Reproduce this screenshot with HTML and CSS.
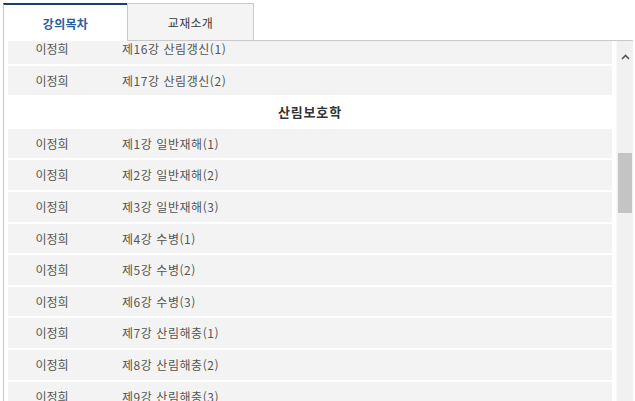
FILE: index.html
```html
<!DOCTYPE html>
<html lang="ko">
<head>
  <meta charset="UTF-8" />
  <title>강의목차</title>
  <link rel="stylesheet" href="styles.css">
</head>
<body>
  <div class="wrap">
    <div class="tabs">
      <button class="tab active">강의목차</button>
      <button class="tab">교재소개</button>
      <div class="tab-rest"></div>
    </div>

    <div class="panel">
      <div class="scroll">
        <div class="list">
          <div class="row"><span class="name">이정희</span><span class="title">제16강 산림갱신(1)</span></div>
          <div class="row"><span class="name">이정희</span><span class="title">제17강 산림갱신(2)</span></div>
          <div class="section">산림보호학</div>
          <div class="row"><span class="name">이정희</span><span class="title">제1강 일반재해(1)</span></div>
          <div class="row"><span class="name">이정희</span><span class="title">제2강 일반재해(2)</span></div>
          <div class="row"><span class="name">이정희</span><span class="title">제3강 일반재해(3)</span></div>
          <div class="row"><span class="name">이정희</span><span class="title">제4강 수병(1)</span></div>
          <div class="row"><span class="name">이정희</span><span class="title">제5강 수병(2)</span></div>
          <div class="row"><span class="name">이정희</span><span class="title">제6강 수병(3)</span></div>
          <div class="row"><span class="name">이정희</span><span class="title">제7강 산림해충(1)</span></div>
          <div class="row"><span class="name">이정희</span><span class="title">제8강 산림해충(2)</span></div>
          <div class="row"><span class="name">이정희</span><span class="title">제9강 산림해충(3)</span></div>
        </div>
      </div>
      <div class="scrollbar">
        <div class="sb-btn">
          <svg width="9" height="6" viewBox="0 0 9 6"><path d="M1 5 L4.5 1.5 L8 5" fill="none" stroke="#555" stroke-width="1.6"/></svg>
        </div>
        <div class="sb-thumb"></div>
      </div>
    </div>
  </div>
</body>
</html>
```

FILE: styles.css
```css
html, body {
  margin: 0;
  padding: 0;
  background: #fff;
  font-family: "Noto Sans CJK KR", "Noto Sans", sans-serif;
  font-size: 12px;
  color: #555;
  overflow: hidden;
}

.wrap {
  width: 630px;
  margin: 3px 0 0 3px;
}

.tabs {
  display: flex;
  height: 38px;
}

.tab {
  box-sizing: border-box;
  height: 38px;
  border: 1px solid #c9c9c9;
  background: #f4f4f4;
  font-family: inherit;
  font-size: 12px;
  color: #3a3a3a;
  padding: 0;
  letter-spacing: 0.3px;
  cursor: pointer;
}

.tab:nth-child(2) {
  width: 127px;
}

.tab.active {
  width: 124px;
  background: #fff;
  border-top: 2px solid #1e3e66;
  border-right: none;
  border-bottom: none;
  color: #2a5d9c;
  font-weight: bold;
}

.tab-rest {
  flex: 1;
  border-bottom: 1px solid #c9c9c9;
}

.panel {
  display: flex;
  height: 370px;
  border-left: 1px solid #c9c9c9;
}

.scroll {
  flex: 1;
  overflow: hidden;
  padding: 0 4px;
}

.list {
  margin-top: -7px;
}

.row {
  display: flex;
  height: 29.6px;
  line-height: 29.6px;
  background: #f3f3f3;
  border-bottom: 2px solid #fff;
}

.name {
  width: 88px;
  text-align: center;
}

.title {
  padding-left: 26px;
  letter-spacing: 0.55px;
}

.section {
  height: 29.6px;
  line-height: 29.6px;
  border-bottom: 2px solid #fff;
  text-align: center;
  font-size: 13px;
  font-weight: bold;
  letter-spacing: 0.8px;
  color: #333;
}

.scrollbar {
  width: 16px;
  background: #f1f1f1;
  border-left: 1px solid #f8f8f8;
}

.sb-btn {
  height: 36px;
  display: flex;
  align-items: flex-end;
  justify-content: center;
}

.sb-btn svg {
  margin-bottom: 17px;
}

.sb-thumb {
  height: 60px;
  margin: 76px 1px 0 1px;
  background: #c4c4c4;
}
```
